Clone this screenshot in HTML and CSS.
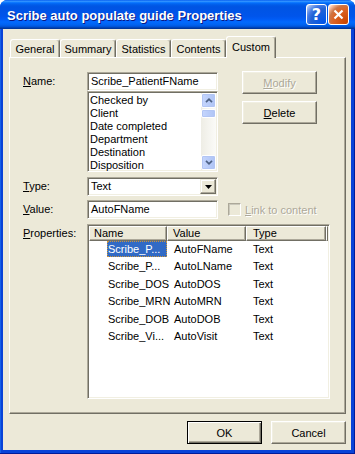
FILE: index.html
```html
<!DOCTYPE html>
<html>
<head>
<meta charset="utf-8">
<link rel="stylesheet" href="styles.css">
</head>
<body>
<div class="win">
  <div class="titlebar">
    <div class="title">Scribe auto populate guide Properties</div>
    <div class="tbtn help">?</div>
    <div class="tbtn close"><svg width="11" height="11" viewBox="0 0 11 11"><path d="M1.5 1.5L9.5 9.5M9.5 1.5L1.5 9.5" stroke="#fff" stroke-width="2.2" fill="none"/></svg></div>
  </div>
  <div class="client">
    <div class="tabs">
      <div class="tab t1">General</div>
      <div class="tab t2">Summary</div>
      <div class="tab t3">Statistics</div>
      <div class="tab t4">Contents</div>
      <div class="tab t5 sel">Custom</div>
    </div>
    <div class="panel">
      <div class="row r-name">
        <div class="lbl"><u>N</u>ame:</div>
        <div class="fcol">
          <div class="edit sunk">Scribe_PatientFName</div>
          <div class="listbox sunk">
            <div class="items">
              <div>Checked by</div>
              <div>Client</div>
              <div>Date completed</div>
              <div>Department</div>
              <div>Destination</div>
              <div>Disposition</div>
            </div>
            <div class="vscroll">
              <div class="sbtn"><svg width="8" height="5" viewBox="0 0 8 5"><path d="M1 4.2L4 1.2L7 4.2" stroke="#4D6185" stroke-width="1.7" fill="none"/></svg></div>
              <div class="thumb"></div>
              <div class="track"></div>
              <div class="sbtn"><svg width="8" height="5" viewBox="0 0 8 5"><path d="M1 0.8L4 3.8L7 0.8" stroke="#4D6185" stroke-width="1.7" fill="none"/></svg></div>
            </div>
          </div>
        </div>
        <div class="bcol">
          <div class="btn dis"><u>M</u>odify</div>
          <div class="btn"><u>D</u>elete</div>
        </div>
      </div>
      <div class="row r-type">
        <div class="lbl"><u>T</u>ype:</div>
        <div class="combo sunk">
          <span class="ctext">Text</span>
          <span class="cbtn"><svg width="7" height="4" viewBox="0 0 7 4"><path d="M0 0H7L3.5 4Z" fill="#000"/></svg></span>
        </div>
      </div>
      <div class="row r-value">
        <div class="lbl"><u>V</u>alue:</div>
        <div class="edit sunk">AutoFName</div>
        <div class="chk"></div>
        <div class="dislabel"><u>L</u>ink to content</div>
      </div>
      <div class="row r-props">
        <div class="lbl"><u>P</u>roperties:</div>
        <div class="lv sunk">
          <div class="lvhead">
            <div class="h c1">Name</div>
            <div class="h c2">Value</div>
            <div class="h c3">Type</div>
            <div class="h c4"></div>
          </div>
          <div class="lvrow"><div class="c1"><span class="selitem">Scribe_P...</span></div><div class="c2">AutoFName</div><div class="c3">Text</div></div>
          <div class="lvrow"><div class="c1"><span>Scribe_P...</span></div><div class="c2">AutoLName</div><div class="c3">Text</div></div>
          <div class="lvrow"><div class="c1"><span>Scribe_DOS</span></div><div class="c2">AutoDOS</div><div class="c3">Text</div></div>
          <div class="lvrow"><div class="c1"><span>Scribe_MRN</span></div><div class="c2">AutoMRN</div><div class="c3">Text</div></div>
          <div class="lvrow"><div class="c1"><span>Scribe_DOB</span></div><div class="c2">AutoDOB</div><div class="c3">Text</div></div>
          <div class="lvrow"><div class="c1"><span>Scribe_Vi...</span></div><div class="c2">AutoVisit</div><div class="c3">Text</div></div>
        </div>
      </div>
    </div>
    <div class="footer">
      <div class="btn def">OK</div>
      <div class="btn">Cancel</div>
    </div>
  </div>
</div>
</body>
</html>
```

FILE: styles.css
```css
* { box-sizing: border-box; margin: 0; padding: 0; }
html, body { width: 355px; height: 454px; overflow: hidden; background: #fff; }
body { font-family: "Liberation Sans", Arial, sans-serif; font-size: 11px; color: #000; }
u { text-decoration: underline; text-underline-offset: 1px; }

.win {
  width: 355px; height: 454px;
  display: flex; flex-direction: column;
  background: #0843D8;
  border-radius: 8px 8px 0 0;
  box-shadow: inset -1px -1px 0 #001C9A, inset 1px 0 0 #1460E8;
}

.titlebar {
  height: 29px;
  flex: none;
  display: flex; align-items: center;
  padding: 0 6px 0 7px;
  border-radius: 7px 7px 0 0;
  background: linear-gradient(to bottom, #0058EE 0%, #3593FF 4%, #288EFF 6%, #127DFF 8%, #036FFC 10%, #0262EE 14%, #0057E5 20%, #0054E3 24%, #0055EB 56%, #005BF5 66%, #026AFE 76%, #0062EF 86%, #0052D6 92%, #0040AB 96%, #003092 100%);
}
.title {
  flex: 1;
  color: #fff;
  font-weight: bold;
  font-size: 13px;
  padding-top: 2px;
  text-shadow: 1px 1px 0 #0A1883;
  white-space: nowrap;
}
.tbtn {
  width: 21px; height: 21px;
  border: 1px solid #fff;
  border-radius: 3px;
  display: flex; align-items: center; justify-content: center;
  color: #fff;
}
.help {
  margin-right: 1px;
  font-weight: bold; font-size: 16px;
  font-family: "DejaVu Sans", sans-serif;
  background: radial-gradient(circle at 90% 90%, #0054E9 0%, #2263D5 55%, #4479E4 70%, #A3BBEC 90%, #fff 100%);
}
.close {
  background: radial-gradient(circle at 90% 90%, #CC4600 0%, #DC6527 55%, #CD7546 70%, #FFCCB2 90%, #fff 100%);
}

.client {
  flex: 1;
  margin: 0 4px 4px 3px;
  background: #ECE9D8;
  padding: 7px 5px 0 6px;
  display: flex; flex-direction: column;
}

.tabs {
  height: 21px;
  display: flex; align-items: flex-end;
  padding-left: 1px;
  position: relative; z-index: 2;
}
.tab {
  height: 18px;
  border-top: 1px solid #fff;
  border-left: 1px solid #fff;
  border-right: 1px solid #716F64;
  box-shadow: inset -1px 0 0 #ACA899;
  border-radius: 3px 3px 0 0;
  display: flex; align-items: center; justify-content: center;
  padding-top: 1px;
  white-space: nowrap;
  background: #ECE9D8;
}
.t1 { width: 50px; }
.t2 { width: 56px; }
.t3 { width: 55px; }
.t4 { width: 55px; }
.t5 { width: 50px; }
.tab.sel { height: 22px; margin-bottom: -1px; padding-top: 0; padding-bottom: 2px; }

.panel {
  height: 357px;
  flex: none;
  border-top: 1px solid #fff;
  border-left: 1px solid #fff;
  border-right: 1px solid #716F64;
  border-bottom: 1px solid #716F64;
  box-shadow: inset -1px -1px 0 #ACA899;
  padding: 14px 0 0 13px;
  position: relative; z-index: 1;
}

.sunk {
  background: #fff;
  border: 1px solid;
  border-color: #ACA899 #fff #fff #ACA899;
  box-shadow: inset 1px 1px 0 #716F64, inset -1px -1px 0 #F1EFE2;
  padding: 1px;
}

.row { display: flex; align-items: flex-start; }
.lbl { width: 64px; flex: none; line-height: 19px; white-space: nowrap; }

.fcol { width: 131px; flex: none; display: flex; flex-direction: column; }
.edit { width: 131px; height: 19px; line-height: 15px; padding-left: 3px; white-space: nowrap; overflow: hidden; }

.listbox { height: 81px; display: flex; }
.items { flex: 1; padding-left: 1px; line-height: 13px; padding-top: 1px; }
.items div { height: 13px; white-space: nowrap; }
.vscroll {
  width: 15px; flex: none;
  display: flex; flex-direction: column;
  background: linear-gradient(to right, #EEEDE5, #FBFBF8);
}
.sbtn, .thumb {
  border: 1px solid #fff;
  border-radius: 2px;
  background: linear-gradient(to right, #C6D6FD, #B9CCF9 50%, #AFC4F5);
  box-shadow: inset 0 0 0 1px #B2C5F4;
  display: flex; align-items: center; justify-content: center;
}
.sbtn { height: 15px; flex: none; }
.thumb { height: 9px; margin-top: 1px; flex: none; }
.track { flex: 1; }

.bcol { margin-left: 24px; margin-top: -1px; display: flex; flex-direction: column; gap: 7px; }
.btn {
  width: 75px; height: 23px;
  background: #ECE9D8;
  border: 1px solid;
  border-color: #fff #716F64 #716F64 #fff;
  box-shadow: inset -1px -1px 0 #ACA899, inset 1px 1px 0 #F1EFE2;
  display: flex; align-items: center; justify-content: center;
}
.btn.dis { color: #ACA899; text-shadow: 1px 1px 0 #fff; }
.btn.def {
  border: 1px solid #000;
  box-shadow: inset 1px 1px 0 #fff, inset -1px -1px 0 #716F64, inset -2px -2px 0 #ACA899;
}

.r-type { margin-top: 5px; }
.combo { width: 131px; height: 19px; display: flex; align-items: stretch; }
.ctext { flex: 1; padding-left: 2px; line-height: 15px; }
.cbtn {
  width: 16px; flex: none;
  background: #ECE9D8;
  border: 1px solid;
  border-color: #F1EFE2 #716F64 #716F64 #F1EFE2;
  box-shadow: inset -1px -1px 0 #ACA899, inset 1px 1px 0 #fff;
  display: flex; align-items: center; justify-content: center;
}

.r-value { margin-top: 4px; align-items: center; }
.chk {
  width: 13px; height: 13px; margin-left: 10px;
  border: 1px solid;
  border-color: #ACA899 #fff #fff #ACA899;
  box-shadow: inset 1px 1px 0 #CAC8BB;
  background: #ECE9D8;
}
.dislabel { margin-left: 4px; color: #ACA899; text-shadow: 1px 1px 0 #fff; white-space: nowrap; }

.r-props { margin-top: 5px; }
.lv { width: 243px; height: 175px; display: flex; flex-direction: column; }
.lvhead { display: flex; height: 15px; flex: none; }
.h {
  height: 15px;
  background: #ECE9D8;
  border: 1px solid;
  border-color: #fff #716F64 #716F64 #fff;
  box-shadow: inset -1px -1px 0 #ACA899;
  line-height: 12px;
  white-space: nowrap;
}
.lvhead .c1 { width: 78px; padding-left: 4px; }
.lvhead .c2 { width: 79px; padding-left: 5px; }
.lvhead .c3 { width: 80px; padding-left: 6px; }
.lvhead .c4 { width: 2px; }
.lvrow { display: flex; height: 17.5px; flex: none; align-items: center; white-space: nowrap; }
.lvhead + .lvrow { margin-top: -1px; }
.lvrow .c1 { width: 78px; padding-left: 18px; }
.lvrow .c1 span { display: block; height: 16px; line-height: 16px; padding-left: 1px; }
.lvrow .c2 { width: 79px; padding-left: 7px; }
.lvrow .c3 { width: 80px; padding-left: 7px; }
.selitem { background: #316AC5; color: #fff; outline: 1px dotted #CE9539; outline-offset: -1px; }

.footer { margin-top: 7px; display: flex; justify-content: flex-end; gap: 9px; }
```
